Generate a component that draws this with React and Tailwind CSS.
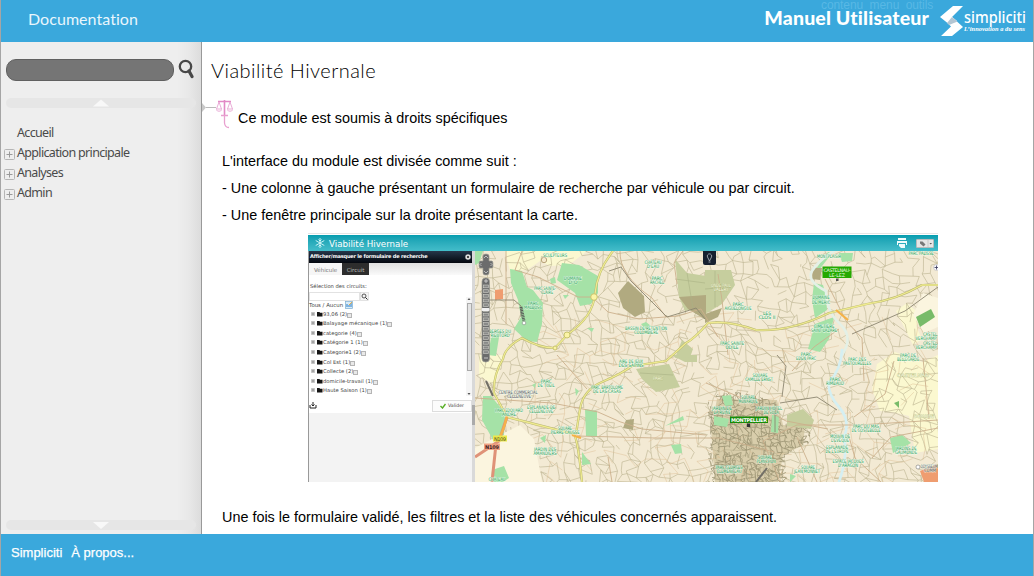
import React from "react";

const NAV = ["Application principale", "Analyses", "Admin"];

const CIRCUITS = [
  "93,06 (2)",
  "Balayage mécanique (1)",
  "categorie (4)",
  "Catégorie 1 (1)",
  "Categorie1 (2)",
  "Col Est (1)",
  "Collecte (2)",
  "domicile-travail (1)",
  "Haute Saison (1)",
];

// Small deterministic generator so the street network is stable between renders.
function makeRandom(seed) {
  let s = seed;
  return () => {
    s = (s * 1664525 + 1013904223) % 4294967296;
    return s / 4294967296;
  };
}

function streetMesh(x0, y0, x1, y1, step, keep, seed, tilt) {
  const rnd = makeRandom(seed);
  const cols = Math.ceil((x1 - x0) / step) + 1;
  const rows = Math.ceil((y1 - y0) / step) + 1;
  const pts = [];
  for (let r = 0; r < rows; r++) {
    for (let c = 0; c < cols; c++) {
      const x = x0 + c * step + (rnd() - 0.5) * step * 0.95 + Math.sin(r / 2) * tilt;
      const y = y0 + r * step + (rnd() - 0.5) * step * 0.95 + Math.sin(c / 3) * tilt;
      pts.push([x.toFixed(1), y.toFixed(1)]);
    }
  }
  let d = "";
  for (let r = 0; r < rows; r++) {
    for (let c = 0; c < cols; c++) {
      const p = pts[r * cols + c];
      if (c + 1 < cols && rnd() < keep) d += `M${p}L${pts[r * cols + c + 1]}`;
      if (r + 1 < rows && rnd() < keep) d += `M${p}L${pts[(r + 1) * cols + c]}`;
      if (c + 1 < cols && r + 1 < rows && rnd() < keep * 0.22) d += `M${p}L${pts[(r + 1) * cols + c + 1]}`;
    }
  }
  return d;
}

const STREETS = streetMesh(-8, -8, 475, 240, 8, 0.6, 17, 3);
const ALLEYS = streetMesh(60, 70, 450, 235, 13, 0.34, 91, 4);
const CENTRE = streetMesh(226, 138, 338, 236, 3.6, 0.6, 5, 1);

const LABELS = [
  [80, 5, "SCULPTEURS", 24],
  [178, 12, "CHÂTEAU", 17], [178, 16, "D'EAU", 12],
  [98, 28, "DOMAINE", 18], [98, 32, "D'O", 9],
  [182, 28, "PARC", 11], [182, 32, "RACHEL", 14],
  [70, 38, "PARC SAINTE-", 22], [72, 42, "CLAIRE", 12],
  [58, 53, "PARC", 11], [58, 57, "MALBOSC", 18],
  [25, 81, "BERGES DU", 22], [25, 85, "RIEUTORD", 19],
  [171, 78, "BASSIN DE RÉTENTION", 42], [171, 82, "COLOMBIÈRE", 24],
  [354, 6, "MONTPLAISIR", 24], [446, 3, "PARC PALISSE", 25],
  [346, 47, "DOMAINE", 17], [346, 52, "DE MÉRIC", 18],
  [263, 54, "PARC", 11], [263, 58, "AIGUELONGUE", 27],
  [292, 63, "LES", 8], [292, 67, "CLOS II", 17],
  [349, 76, "CIMETIÈRE", 21], [349, 80, "SAINT-LAZARE", 26],
  [257, 93, "PARC SAINTE", 24], [257, 97, "ODILE", 13],
  [331, 104, "PARC", 11], [331, 108, "EDEN PARC", 20],
  [455, 84, "CASTEL", 14], [451, 88, "VERCHAMP", 21],
  [455, 93, "CASTEL", 14], [451, 97, "VERCHAMP", 21],
  [433, 105, "PARC DE", 16], [433, 109, "BELLEGARDE", 22],
  [156, 111, "AIRE DE JEUX", 24], [156, 115, "DES SAPINS", 25],
  [71, 131, "PARC", 11], [71, 135, "DE TUEIL", 17],
  [132, 137, "PARC BARTOLOMÉ", 32], [132, 141, "DE LAS CASAS", 28],
  [66, 157, "ESPLANADE DE", 28], [66, 161, "CELLENEUVE", 24],
  [34, 160, "PARC EDOUARD", 28], [34, 164, "ANDRÉ", 14],
  [90, 178, "SQUARE", 14], [90, 182, "PIERRE CAUSSE", 29],
  [70, 199, "JARDIN DES", 22], [70, 203, "AMANDIERS", 23],
  [22, 229, "CHÂTEAU", 17],
  [285, 125, "SQUARE", 15], [284, 129, "CAMILLE ERNST", 28],
  [273, 147, "SQUARE", 14], [273, 151, "MONARQUE", 19],
  [247, 158, "JARDIN DE", 20], [247, 162, "LA REINE", 17],
  [294, 158, "JARDIN HÔTEL", 26], [296, 162, "DE SOLA", 15],
  [382, 109, "PARC DES", 18], [382, 113, "PASTOURELLES", 28],
  [360, 129, "PARC", 11], [360, 133, "RIMBAUD", 18],
  [391, 176, "PARC DU MAS", 26], [391, 180, "DE COSTEBELLE", 29],
  [365, 186, "MOULIN DE", 20], [365, 190, "L'EVÊQUE", 18],
  [362, 197, "ESPLANADE", 22], [362, 201, "DE L'EUROPE", 23],
  [373, 211, "ESPACE JACQUES", 31], [373, 215, "D'ARAGON", 20],
  [431, 198, "JARDINS DE", 21], [431, 202, "GAUMONDE", 22],
  [290, 207, "SQUARE", 14], [291, 211, "PLANCHON", 19],
  [254, 217, "PARC GEORGES", 27], [254, 221, "CLEMENCEAU", 25],
  [333, 217, "SQUARE", 14], [332, 221, "JEAN MONNET", 26],
];

function CityMap() {
  return (
    <svg viewBox="0 0 463 231" className="block h-[231px] w-[463px] shrink-0">
      <defs>
        <clipPath id="old-town">
          <path d="M232 152L243 143 262 141 285 146 301 151 306 174 322 170 336 178 334 192 318 198 309 207 312 231H238L233 206 236 190Z" />
        </clipPath>
      </defs>
      <rect width="463" height="231" fill="#f3ead4" />
      <g fill="#fbf8d0">
        <path d="M30 0H112L94 14 75 15 65 10 52 19 35 20Z" />
        <path d="M397 138L402 113 420 101 447 111 463 104V198L440 202 434 165 418 161 405 160Z" />
        <path d="M421 60L432 52 447 65 441 75 447 88 438 94Z" />
        <path d="M4 104H30L20 134 4 125Z" />
      </g>
      <path d="M242 148L302 149 308 174 330 176 328 194 308 204 303 231H240L236 178Z" fill="#d8cdab" />
      <path d={STREETS} stroke="#bab18e" strokeWidth=".6" fill="none" />
      <path d={ALLEYS} stroke="#dcbd92" strokeWidth=".45" fill="none" />
      <path d="M448 42L463 47V76L449 82 438 64Z M0 197L45 174 59 188 67 231H0Z" fill="#fbf5df" />
      <path d={CENTRE} clipPath="url(#old-town)" stroke="#9c9473" strokeWidth=".8" fill="none" />
      <g fill="#a5e2a7">
        <path d="M35 18L47 20 52 36 58 39 68 52 67 73 62 91 52 90 39 78 46 66 43 49 36 32Z" />
        <path d="M87 12L104 14 123 25 123 42 116 53 105 55 100 42 82 29Z" />
        <path d="M0 0H8L4 12 0 14Z M16 87L25 80 21 105 13 104Z M75 28L80 26 81 32 76 33Z M88 44L94 44 90 48Z" />
        <path d="M8 145L16 145 30 162 29 184 18 189 7 169Z M110 158L122 160 122 186 111 185Z" />
        <path d="M17 219L29 215 34 227 28 231H16Z M107 201L116 213 107 214Z M65 187L71 184 70 192Z M112 77L119 77 117 81Z" />
        <path d="M339 32L348 34 351 45 352 59 340 67 337 49Z M340 73L359 66 354 88 345 101 333 98Z" />
        <path d="M364 2L378 2 377 10 367 11Z M353 1H358L344 19 338 22Z" />
        <path d="M415 187L427 184 436 192 418 202Z M315 223L321 225 315 231Z M297 164L304 165 303 182 296 181Z M239 165L254 168 252 176 239 174Z" />
        <path d="M190 175L208 165 209 169 193 174Z M196 194L206 193 207 202 200 203Z M100 137L104 140 101 145Z" />
        <path d="M57 134L61 132 60 137Z M166 73L171 71 176 75 170 78Z M247 145L256 144 258 154 250 155Z" />
      </g>
      <g fill="#c6ce9e">
        <path d="M200 8L212 22 231 25V55L210 60 204 46Z M230 19H256L260 34 247 53 230 63Z" />
        <path d="M161 118L194 113 205 136 181 141 167 128Z M196 104H222V111H210Z" />
        <path d="M312 164L328 158 339 169 336 178 312 175Z" />
      </g>
      <path d="M153 30L169 45 170 61 160 66 148 57 143 42Z M204 46L231 44V69L213 58Z M230 63L247 57 243 66 230 72Z M151 169L159 168 158 179 148 177Z M338 17L347 17 345 29 337 28Z" fill="#b1aa80" />
      <path d="M207 89L218 98 215 106 200 107Z" fill="#c6ce9e" />
      <path d="M200 28L230 32M212 22L218 57M230 38L256 36M240 20V56M165 122L198 124" fill="none" stroke="#aab184" strokeWidth=".6" />
      <path d="M441 66L456 58 460 66 445 76Z M419 152L424 150 424 157Z" fill="#78bb69" />
      <path d="M20 39L28 38 28 48 20 49Z M445 220L463 213V231H449Z" fill="#ef9d70" />

      <g fill="none" strokeLinecap="round">
        <path d="M359 0Q343 10 337 20T351 40Q351 60 365 73T367 104" stroke="#e4f0e6" strokeWidth="2.6" />
        <path d="M367 99Q366 119 354 131Q352 142 364 156T369 186Q373 206 364 231" stroke="#d5eff2" strokeWidth="2.7" />
      </g>
      <g fill="none" stroke="#ccb08c" strokeWidth=".9">
        <path d="M47 0L40 19 63 26 103 46 117 46 L133 61 164 68 203 65 226 58 243 86" />
        <path d="M31 0V73M145 0Q144 24 177 47L191 66M0 147L77 152 123 161Q145 172 167 178L231 184" />
        <path d="M82 104L112 138M231 132Q261 144 286 156L311 170 353 178M305 231L288 190 322 174 384 174L463 169" />
        <path d="M317 120L339 96 364 78M243 23L247 49 253 104M350 28L371 70 387 87 389 130M322 186L342 231" />
        <path d="M373 182L380 207 406 231M419 110L410 143 379 166M463 177L416 186 397 207M448 107L454 168" />
        <path d="M133 206L137 231M208 0L199 12 202 33M102 185L181 187 244 187 299 201" />
      </g>
      <path d="M134 20L146 16 156 30 173 47 192 66 212 60 221 57 230 68 M14 49H39L46 55V66 M302 104L311 115 307 146 M305 152L342 146 362 159 M377 83L430 60 463 36 M300 153V181" fill="none" stroke="#8c8670" strokeWidth=".9" />
      <path d="M46 56L49 70" stroke="#555" strokeWidth="3" strokeDasharray="1 .6" />
      <circle cx="49" cy="72" r="1.8" fill="#fff" stroke="#777" strokeWidth=".5" />
      <path d="M11 130L18 145M281 231L292 217" stroke="#726f66" strokeWidth="2" />

      {[["#b7b66f", 2.2], ["#f0eb90", 1.3]].map(([stroke, width]) => (
        <g key={stroke} fill="none" stroke={stroke} strokeWidth={width}>
          <path d="M138 0Q122 20 120 43T93 83L80 97Q64 97 47 87Q30 96 28 108Q18 124 19 142L32 166 99 183Q103 190 107 231" />
          <path d="M101 183L105 158Q108 139 127 131T157 115L191 110 211 92Q219 88 233 72Q253 69 281 79Q315 81 354 62L392 53Q421 49 447 34H463" />
        </g>
      ))}
      <path d="M32 166L24 190 0 206M21 193L17 231" fill="none" stroke="#df9278" strokeWidth="3" />
      <path d="M32 165Q28 183 22 190M97 184L106 187M361 59L373 69" fill="none" stroke="#f5b248" strokeWidth="2.2" />
      <g fill="#fbf4a5" stroke="#c8c36d" strokeWidth="1">
        <circle cx="119" cy="46" r="3.3" /><circle cx="92" cy="84" r="3" /><circle cx="80" cy="97" r="2" /><circle cx="69" cy="9" r="2.7" fill="#f5e8cc" stroke="#b9a47b" />
      </g>

      <g fontFamily="'DejaVu Sans', sans-serif" textAnchor="middle" fontSize="4.9" fill="#1f9f5c" stroke="#f4fff2" strokeOpacity=".75" strokeWidth=".9" paintOrder="stroke">
        {LABELS.map(([x, y, text, width], i) => (
          <text key={i} x={x} y={y + 1} textLength={width} lengthAdjust="spacingAndGlyphs">{text}</text>
        ))}
        <g fill="#fbfde8" stroke="#a9b26e" strokeWidth=".6">
          <text x="246" y="36" textLength="20" lengthAdjust="spacingAndGlyphs">ONDE PAUL</text><text x="246" y="40" textLength="15" lengthAdjust="spacingAndGlyphs">VALÉRY</text>
          <text x="183" y="129" textLength="10" lengthAdjust="spacingAndGlyphs">PARC</text><text x="438" y="126" textLength="32" lengthAdjust="spacingAndGlyphs">CASTELNAU</text>
          <text x="449" y="167" textLength="20" lengthAdjust="spacingAndGlyphs">DOMAINE</text>
        </g>
        <g fill="#4d5362">
          <text x="43" y="143" textLength="39" lengthAdjust="spacingAndGlyphs">CENTRE COMMERCIAL</text><text x="44" y="147" textLength="24" lengthAdjust="spacingAndGlyphs">CELLENEUVE</text>
          <text x="454" y="217" textLength="17" lengthAdjust="spacingAndGlyphs">ODYSSEUM</text><text x="455" y="221" textLength="12" lengthAdjust="spacingAndGlyphs">COMM</text>
        </g>
      </g>
      <circle cx="443" cy="216" r="2" fill="#fff" stroke="#777" strokeWidth=".6" />

      <g fontFamily="'DejaVu Sans', sans-serif" textAnchor="middle">
        <rect x="347.500" y="15.500" width="29" height="11.500" fill="#24a900" />
        <text x="362" y="20.600" fontSize="4.800" fill="#efffe9" textLength="27">CASTELNAU-</text>
        <text x="362" y="25.500" fontSize="4.800" fill="#efffe9" textLength="16">LE-LEZ</text>
        <rect x="361" y="27.500" width="2.500" height="2.500" fill="#555" />
        <g fontWeight="bold">
          <rect x="255" y="165.500" width="38" height="6.500" fill="#178c08" />
          <text x="274" y="170.800" fontSize="5" fill="#fff" textLength="36">MONTPELLIER</text>
          <rect x="272" y="172.500" width="3" height="3.500" fill="#333" />
          <rect x="9" y="192.500" width="16" height="6.500" fill="#efa082" />
          <text x="17" y="197.700" fontSize="5" fill="#422" textLength="14">N109</text>
        </g>
        <rect x="18" y="184.500" width="14" height="6" fill="#ebe84b" />
        <text x="25" y="189.500" fontSize="5" fill="#4b4b20" textLength="12">N109</text>
      </g>

      <g fill="#6b6c6c" stroke="#9b9b94" strokeWidth=".7">
        <path d="M8 5Q8 3 11 3T14 5V10H17Q18 10 18 13.500T17 17H14V22Q14 24 11 24T8 22V17H5Q4 17 4 13.500T5 10H8Z" />
        <rect x="7" y="27" width="7.500" height="84" rx="3.500" />
      </g>
      <path d="M9 7L11 5 13 7M9 20L11 22 13 20M6.500 12L5 13.500 6.500 15M15.500 12L17 13.500 15.500 15" fill="none" stroke="#ddd" strokeWidth=".7" />
      <g fill="#898a89">
        {Array.from({ length: 15 }, (_, i) => <rect key={i} x="8.500" y={34 + i * 4.7} width="5" height="2.800" stroke="#d0d0c8" strokeWidth=".6" />)}
      </g>
      <rect x="6.500" y="57" width="8" height="3" rx="1" fill="#f1f1f1" />
      <path d="M9 30H13M11 28V32M9 107H13" stroke="#ddd" strokeWidth=".8" />
      <path d="M228 0H241V12Q241 14 239 14H230Q228 14 228 12Z" fill="#172130" />
      <path d="M232.500 6A2.200 2.200 0 1 1 236.500 6L234.500 10ZM233.500 11H235.500" fill="none" stroke="#b5bbc3" strokeWidth=".8" />
      <circle cx="461.500" cy="16.500" r="3" fill="#f9f9ff" stroke="#aaa" strokeWidth=".5" />
      <path d="M459.500 16.500H463M461.500 14.500V18.500" stroke="#335" strokeWidth=".8" />
    </svg>
  );
}

function Scales() {
  return (
    <svg viewBox="0 0 32 32" className="absolute -left-[20px] -top-[1px] h-8 w-8" fill="none">
      <path d="M0 4L4 8.500 0 13Z" fill="#c9c9c9" />
      <path d="M4 8.500H14" stroke="#bbb" />
      <path d="M16 2.500H29M22.500 1V16" stroke="#e28ac6" strokeWidth="1.600" />
      <path d="M19 16.500H26M22.500 17V24Q23 28.500 27 28.500" stroke="#e8a0cf" strokeWidth="1.300" />
      <path d="M17 3L14.500 10H19.500ZM28 3L25.500 10H30.500ZM14 10.500Q17 14 20 10.500M25 10.500Q28 14 31 10.500" stroke="#e7a3d1" strokeWidth=".9" />
    </svg>
  );
}

function SearchPanel() {
  return (
    <div className="flex h-[231px] w-[167px] shrink-0 border-l border-[#999] bg-[#f3f3f3] font-['DejaVu_Sans',sans-serif] text-[#444]">
      <div className="w-[163px]">
        <div className="flex h-[12px] items-center justify-between bg-gradient-to-b from-[#26374a] to-[#05080f] pl-[1px] pr-[1px] text-[5.100px] font-bold text-white">
          <span className="whitespace-nowrap tracking-[-.24px]">Afficher/masquer le formulaire de recherche</span>
          <svg viewBox="0 0 6 6" className="h-[6px] w-[6px]"><circle cx="3" cy="3" r="2.700" fill="#ddd" /><path d="M2 2L4 4M4 2L2 4" stroke="#222" strokeWidth=".8" /></svg>
        </div>
        <div className="flex h-[12px] bg-gradient-to-b from-[#e0e0e0] to-[#fafafa] text-[5.500px] leading-[14px]">
          <span className="w-[33px] bg-[#f6f6f6] text-center text-[#777]">Véhicule</span>
          <span className="h-[12px] w-[27px] bg-[#2d2d2d] text-center text-[#bbb]">Circuit</span>
        </div>
        <div className="h-[138px] bg-white">
          <div className="pt-[7px] pl-[1px] text-[5.200px] leading-[8px]">Sélection des circuits:</div>
          <div className="mt-[2px] flex h-[9px] items-center">
            <span className="h-[9px] w-[51px] border border-[#e2e2e2]" />
            <svg viewBox="0 0 9 9" className="h-[9px] w-[9px]"><rect x=".5" y=".5" width="8" height="8" fill="#f4f4f4" stroke="#ccc" strokeWidth=".5" /><circle cx="4" cy="4" r="2" fill="none" stroke="#333" strokeWidth=".8" /><path d="M5.500 5.500L7.500 7.500" stroke="#222" strokeWidth="1" /></svg>
          </div>
          <div className="flex h-[8px] items-center gap-[2px] text-[5.400px] leading-[8px]">
            <span>Tous / Aucun</span>
            <svg viewBox="0 0 8 8" className="h-[8px] w-[8px]"><rect x=".5" y=".5" width="7" height="7" fill="#d9ebf8" stroke="#7cadd0" strokeWidth=".7" /><path d="M2 6V3M4 6V4M6 6V2" stroke="#287dc8" strokeWidth="1" /><path d="M4 4L7 1" stroke="#e9ac40" /></svg>
          </div>
          <div className="flex h-[87px]">
            <ul className="h-[87px] w-[157px] pl-[2px] pt-[.5px]">
              {CIRCUITS.map((name) => (
                <li key={name} className="flex h-[9.550px] items-center text-[5.250px] leading-[9px]">
                  <svg viewBox="0 0 12 7" className="h-[7px] w-[12px]"><path d="M.5 1.500H3.500V4.500H.5Z" fill="#fff" stroke="#888" strokeWidth=".5" /><path d="M1 3H3M2 2V4" stroke="#333" strokeWidth=".5" /><path d="M6 1H8.500L9 1.700H11.500V5.500H6Z" fill="#151515" /></svg>
                  <span className="whitespace-nowrap">{name}</span>
                  <span className="mt-[2px] h-[5px] w-[5px] border border-[#b5b5b5] bg-[#e9e9e9]" />
                </li>
              ))}
            </ul>
            <div className="-mt-[12px] flex h-[99px] w-[6px] flex-col items-center justify-between bg-[#f5f5f5]">
              <svg viewBox="0 0 6 4" className="h-[4px] w-[6px]"><path d="M1.500 3H4.500L3 1Z" fill="#555" /></svg>
              <span className="mb-auto mt-[2px] h-[68px] w-[5px] border border-[#aaa] bg-[#e4e4e4]" />
              <svg viewBox="0 0 6 4" className="h-[4px] w-[6px]"><path d="M1.500 1H4.500L3 3Z" fill="#555" /></svg>
            </div>
          </div>
          <div className="flex items-end justify-between pt-[4px]">
            <svg viewBox="0 0 8 8" className="mb-[3px] h-[8px] w-[8px]"><path d="M1 4V7H7V4M4 1V5M2.500 3.500L4 5 5.500 3.500" fill="none" stroke="#222" strokeWidth="1" /></svg>
            <span className="flex h-[12px] w-[40px] items-center justify-center gap-[2px] border border-[#ddd] bg-[#fcfcfc] text-[4.700px]">
              <svg viewBox="0 0 6 6" className="h-[6px] w-[6px]"><path d="M.5 3L2.500 5 5.500 1" fill="none" stroke="#58ae25" strokeWidth="1.400" /></svg>
              Valider
            </span>
          </div>
        </div>
      </div>
      <div className="flex w-[3px] items-start bg-[#d9d9d9]"><span className="mt-[154px] h-[20px] w-[3px] bg-[#aaa]" /></div>
    </div>
  );
}

function ModuleShot() {
  return (
    <div className="flex h-[249px] w-[630px] flex-col border-t border-[#e5e5e5] pt-[1px]">
      <div className="flex h-[16px] items-center bg-gradient-to-b from-[#039daf] to-[#43bdca] pl-[7px] pr-[4px] font-['DejaVu_Sans',sans-serif] text-white">
        <svg viewBox="0 0 10 10" className="h-[10px] w-[10px]"><path d="M5 0V10M.7 2.500L9.300 7.500M.7 7.500L9.300 2.500M3.500 1.500L5 3 6.500 1.500M3.500 8.500L5 7 6.500 8.500" fill="none" stroke="#d9f8fb" strokeWidth=".9" /></svg>
        <span className="ml-[4px] pt-[1px] text-[8.700px] leading-[14px]">Viabilité Hivernale</span>
        <svg viewBox="0 0 12 10" className="ml-auto h-[10px] w-[12px]"><path d="M2 0H10V2H2ZM1 3H11V7H10V5H2V7H1ZM3 6H9V10H5L3 8Z" fill="#effcfc" /></svg>
        <span className="ml-[8px] flex h-[9px] w-[18px] items-center rounded-[1px] border border-[#bbb] bg-[#e6e6e6]">
          <svg viewBox="0 0 16 7" className="h-[7px] w-[16px]"><path d="M3 1.500H5.500L8.500 4.500 6.500 6.500 3 3.500Z" fill="#777" /><path d="M11 0V7" stroke="#aaa" strokeWidth=".5" /><path d="M12.500 3H15L13.700 4.500Z" fill="#555" /></svg>
        </span>
      </div>
      <div className="flex">
        <SearchPanel />
        <CityMap />
      </div>
    </div>
  );
}

function BarHandle({ down }) {
  return (
    <div className="flex h-[10px] w-[190px] justify-center rounded-full bg-[#e6e6e6]">
      <svg viewBox="0 0 16 10" className="h-[10px] w-[16px]"><path d={down ? "M0 2H16L8 9Z" : "M0 8.500H16L8 1.500Z"} fill="#f8f8f8" /></svg>
    </div>
  );
}

export default function App() {
  return (
    <div className="flex h-[576px] w-[1034px] flex-col overflow-hidden border-x border-[#a5a5a5] bg-white font-['Liberation_Sans',Arial,sans-serif] text-black">
      <header className="relative flex h-[42px] shrink-0 bg-[#3aa8dc] text-white">
        <h1 className="pl-[27px] pt-[7px] font-[Lato,sans-serif] text-[16px] font-normal leading-[23px] tracking-[.05px] text-[#e9f6fc]">Documentation</h1>
        <div className="absolute left-[820px] top-[-2px] whitespace-nowrap text-[12px] leading-[14px] tracking-[-.09px] text-[#58b8e5]">contenu&nbsp; menu&nbsp; outils</div>
        <div className="relative ml-auto mr-[9px] whitespace-nowrap pt-[5px] font-[Lato,sans-serif] text-[19.500px] font-black leading-[26px] tracking-[.16px]">Manuel Utilisateur</div>
        <svg viewBox="0 0 94 42" className="mr-[1px] h-[42px] w-[94px]">
          <path d="M2 17L15 6H25L14 17 19 21 12 25Z" fill="#fff" />
          <path d="M14 17L25 27 14 36H3L13 26.500 11 24.500Z" fill="#fff" />
          <path d="M14 17L19.500 21.500 11 25 9 23Z" fill="#b4c6d3" />
          <text x="26" y="23" fontFamily="Noto Sans, sans-serif" fontSize="15.500" fontWeight="500" fill="#fff" textLength="62" lengthAdjust="spacingAndGlyphs">simpliciti</text>
          <text x="26" y="31" fontFamily="Liberation Serif, serif" fontSize="6.300" fontStyle="italic" fontWeight="bold" fill="#fff" textLength="61">L’innovation a du sens</text>
        </svg>
      </header>

      <div className="flex h-[492px] shrink-0">
        <aside className="flex w-[201px] shrink-0 flex-col border-r border-[#999] bg-[linear-gradient(to_right,#eeeeee_176px,#e8e8e8_188px,#dcdcdc_200px)] pl-[5px]">
          <div className="flex pt-[17px]">
            <div className="h-[22px] w-[168px] rounded-[10px] border border-[#606060] bg-[#757575]" />
            <svg viewBox="0 0 17 22" className="ml-[3px] h-[22px] w-[17px]" fill="none" stroke="#484848"><circle cx="8.500" cy="7.500" r="5.700" strokeWidth="2.300" /><path d="M12 12L15 17.500" strokeWidth="3.200" strokeLinecap="round" /></svg>
          </div>
          <div className="pt-[17px]"><BarHandle /></div>
          <nav className="-ml-[3px] pt-[15px] font-['Noto_Sans',sans-serif] text-[12.500px] leading-[20px] tracking-[-.67px] text-[#4a4a4a]">
            <div className="pl-[14px]">Accueil</div>
            {NAV.map((item) => (
              <div key={item} className="flex h-[20px]">
                <svg viewBox="0 0 14 20" className="h-[20px] w-[14px]" fill="none"><rect x="1.500" y="6.500" width="10" height="10" rx="1" stroke="#b5b5b5" /><path d="M3.500 11.500H9.500M6.500 8.500V14.500" stroke="#999" /></svg>
                <span>{item}</span>
              </div>
            ))}
          </nav>
          <div className="mt-auto pb-[4px]"><BarHandle down /></div>
        </aside>

        <main className="flex-1 pl-[9px]">
          <h2 className="pt-[14px] font-[Lato,sans-serif] text-[20px] font-light leading-[28px] tracking-[.45px]">Viabilité Hivernale</h2>
          <div className="pl-[11px] text-[14.400px]">
            <div className="relative h-[64px] pl-[16px] pt-[13px]">
              <div className="absolute left-0 top-[16px]"><Scales /></div>
              <p className="pt-[11px] leading-[20px]">Ce module est soumis à droits spécifiques</p>
            </div>
            <p className="leading-[27px]">L'interface du module est divisée comme suit :</p>
            <p className="leading-[27px]">- Une colonne à gauche présentant un formulaire de recherche par véhicule ou par circuit.</p>
            <p className="leading-[27px]">- Une fenêtre principale sur la droite présentant la carte.</p>
            <div className="ml-[86px] mt-[4px]"><ModuleShot /></div>
            <p className="mt-[22px] leading-[27px]">Une fois le formulaire validé, les filtres et la liste des véhicules concernés apparaissent.</p>
          </div>
        </main>
      </div>

      <footer className="flex h-[42px] shrink-0 gap-[9px] bg-[#3aa8dc] pl-[10px] pt-[9px] text-[13px] leading-[20px] text-white [-webkit-text-stroke:.25px_white]">
        <span>Simpliciti</span>
        <span>À propos...</span>
      </footer>
    </div>
  );
}
